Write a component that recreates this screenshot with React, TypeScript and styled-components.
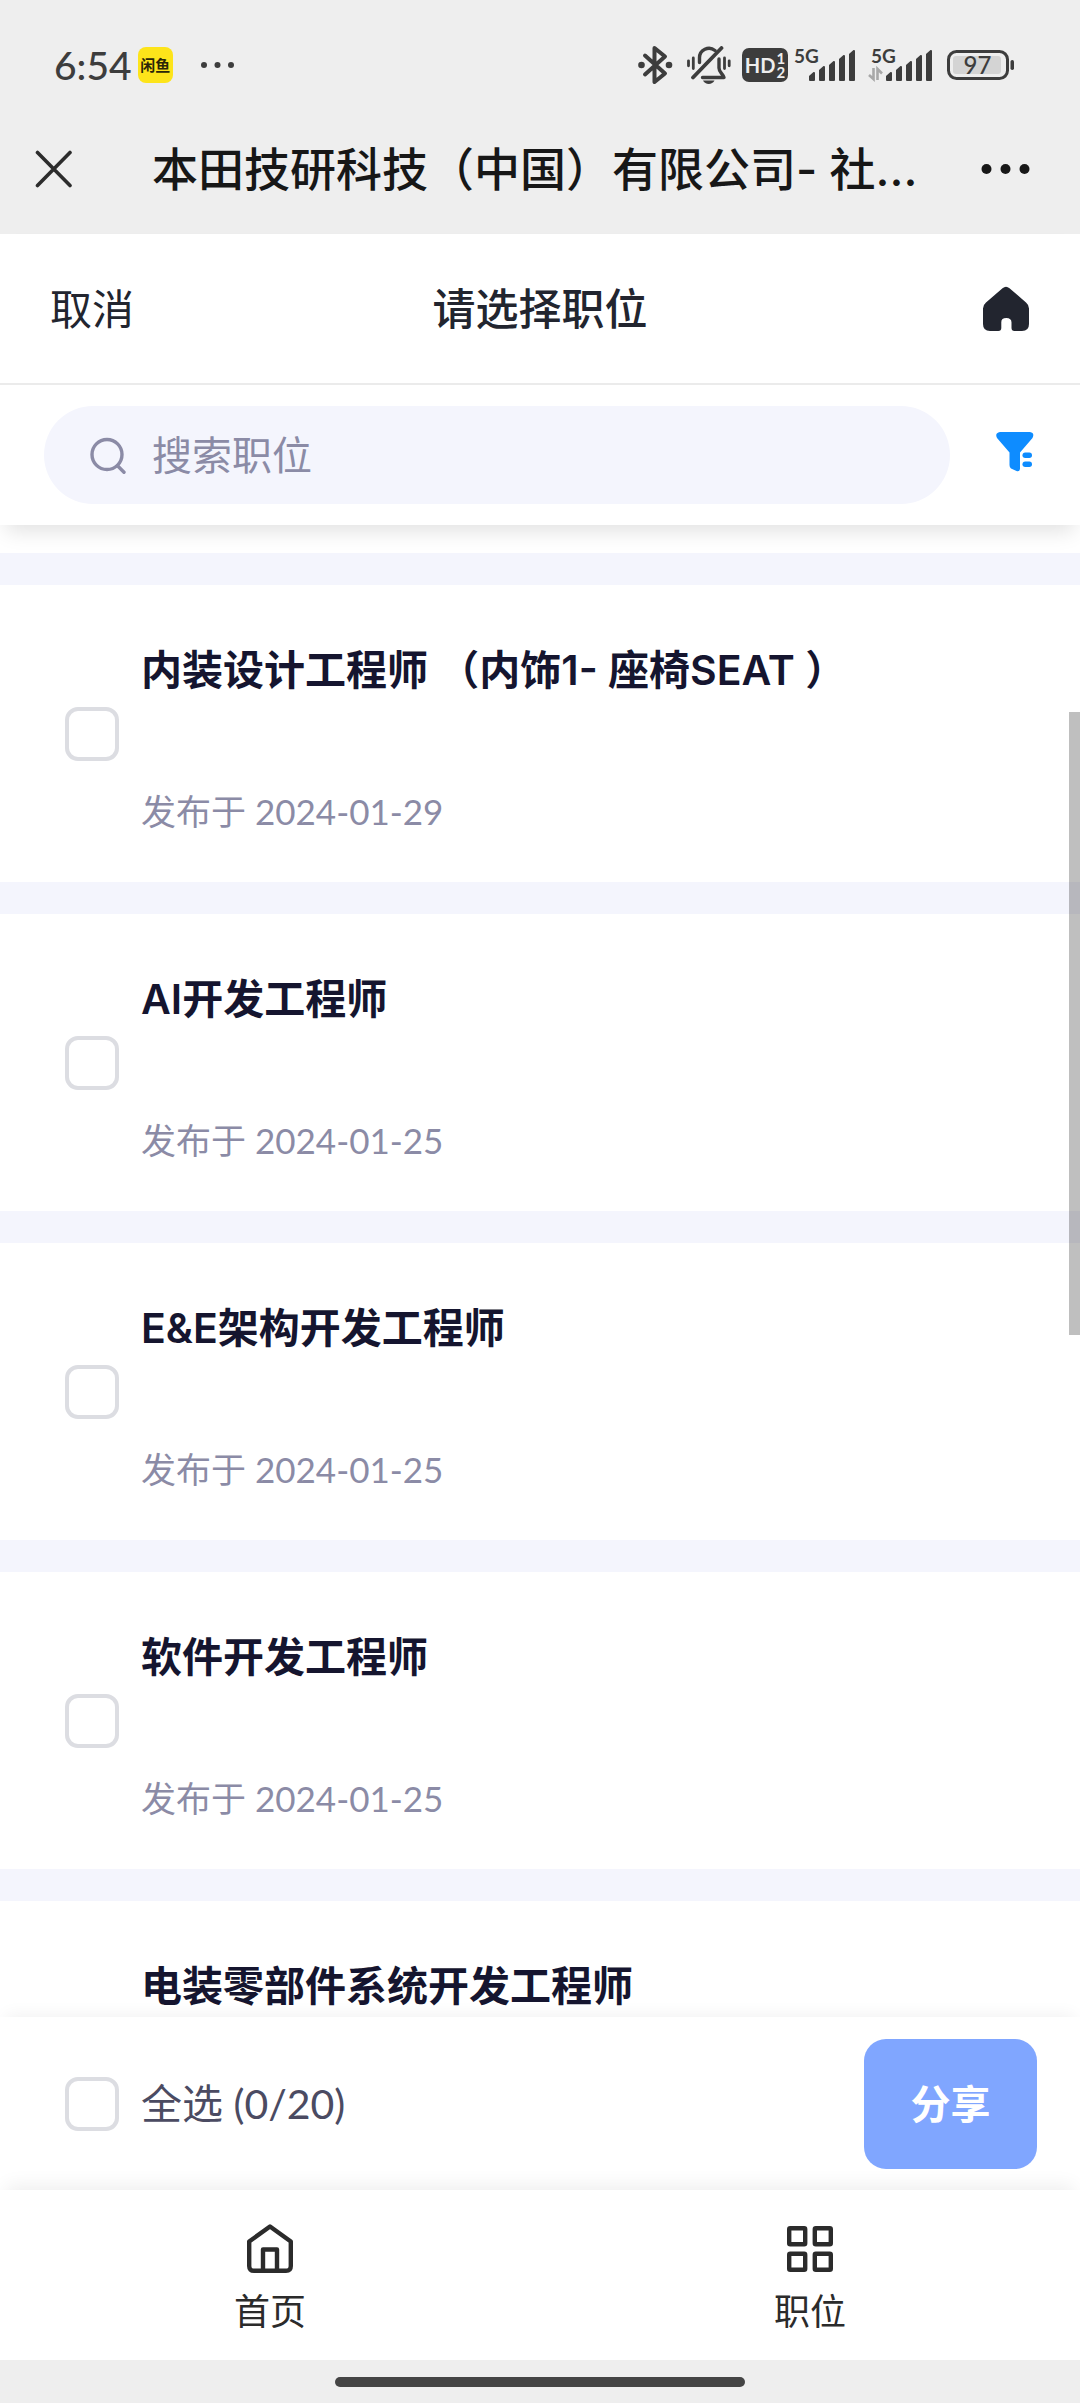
import React, { useState } from "react";
import styled, { createGlobalStyle } from "styled-components";

const GlobalStyle = createGlobalStyle`
  *, *::before, *::after { box-sizing: border-box; }
  html, body { margin: 0; padding: 0; }
  body {
    background: #ffffff;
    font-family: Lato, "Noto Sans CJK SC", sans-serif;
    -webkit-font-smoothing: antialiased;
  }
  button, input { font: inherit; color: inherit; }
`;

const Page = styled.div`
  display: flex;
  flex-direction: column;
  height: 100vh;
  overflow: hidden;
`;

/* ---------- system status bar ---------- */

const StatusBar = styled.div`
  display: flex;
  align-items: center;
  justify-content: space-between;
  flex: none;
  height: 104px;
  padding: 26px 66px 0 54px;
  background: #eeeeee;
  color: #3d3d3d;
`;

const StatusGroup = styled.div<{ $gap: number }>`
  display: flex;
  align-items: center;
  gap: ${(p) => p.$gap}px;
  svg { display: block; }
`;

const Clock = styled.span`
  font-size: 39px;
  line-height: 48px;
  font-weight: 500;
`;

const AppBadge = styled.span`
  display: flex;
  align-items: center;
  justify-content: center;
  width: 35px;
  height: 36px;
  border-radius: 8px;
  background: #fde41a;
  color: #2a2608;
  font-size: 15px;
  line-height: 20px;
  font-weight: 700;
`;

const MoreDots = styled.svg`
  margin-left: 20px;
`;

const HdBadge = styled.span`
  display: flex;
  align-items: center;
  justify-content: center;
  gap: 1px;
  width: 46px;
  height: 34px;
  border-radius: 7px;
  background: #3d3d3d;
  color: #eeeeee;
  font-size: 20px;
  line-height: 24px;
  font-weight: 700;
`;

const HdLines = styled.span`
  display: flex;
  flex-direction: column;
  font-size: 15px;
  line-height: 14px;
`;

/* ---------- browser title bar ---------- */

const TitleBar = styled.div`
  display: flex;
  align-items: center;
  flex: none;
  height: 130px;
  padding: 0 44px 0 24px;
  background: #eeeeee;
  color: #171717;
`;

const IconButton = styled.button`
  display: flex;
  align-items: center;
  justify-content: center;
  flex: none;
  width: 60px;
  height: 60px;
  padding: 0;
  border: 0;
  background: none;
  cursor: pointer;
  svg { display: block; }
`;

const PageTitle = styled.div`
  flex: 1;
  min-width: 0;
  padding-left: 68px;
  overflow: hidden;
  white-space: nowrap;
  font-family: Inter, "Noto Sans CJK SC", sans-serif;
  font-size: 46px;
  line-height: 60px;
  font-weight: 500;
`;

/* ---------- sticky header ---------- */

const Header = styled.header`
  position: relative;
  z-index: 1;
  flex: none;
  background: #ffffff;
  box-shadow: 0 12px 20px -6px rgba(0, 0, 0, 0.12);
`;

const NavRow = styled.div`
  display: grid;
  grid-template-columns: 1fr auto 1fr;
  align-items: center;
  height: 151px;
  padding: 0 44px;
  border-bottom: 2px solid #ebebeb;
  color: #22252f;
`;

const CancelButton = styled.button`
  justify-self: start;
  padding: 0 6px;
  border: 0;
  background: none;
  font-size: 42px;
  line-height: 60px;
  cursor: pointer;
`;

const NavTitle = styled.h1`
  margin: 0;
  font-size: 43px;
  line-height: 60px;
  font-weight: 500;
`;

const HomeButton = styled(IconButton)`
  justify-self: end;
`;

const SearchRow = styled.div`
  display: flex;
  align-items: center;
  gap: 35px;
  height: 140px;
  padding: 0 35px 0 44px;
`;

const SearchBox = styled.label`
  display: flex;
  align-items: center;
  gap: 25px;
  flex: 1;
  min-width: 0;
  height: 98px;
  padding: 0 46px;
  border-radius: 49px;
  background: #f4f5fd;
  svg { flex: none; }
`;

const SearchInput = styled.input`
  flex: 1;
  min-width: 0;
  height: 60px;
  padding: 0;
  border: 0;
  outline: 0;
  background: none;
  color: #15152f;
  font-size: 40px;
  &::placeholder { color: #8b8ba6; opacity: 1; }
`;

/* ---------- job list ---------- */

const ListArea = styled.main`
  position: relative;
  flex: 1;
  min-height: 0;
  overflow: hidden;
`;

const JobList = styled.ul`
  margin: 0;
  padding: 28px 0 0;
  list-style: none;
`;

const JobItem = styled.li`
  border-top: 32px solid #f4f5fd;
`;

const JobLabel = styled.label`
  display: flex;
  align-items: center;
  gap: 22px;
  min-height: 297px;
  padding: 0 65px;
  cursor: pointer;
`;

const JobBody = styled.span`
  display: flex;
  flex-direction: column;
  align-self: flex-start;
  gap: 89px;
  padding: 57px 0 47px;
`;

const JobName = styled.span`
  color: #15152f;
  font-family: Inter, "Noto Sans CJK SC", sans-serif;
  font-size: 41px;
  line-height: 56px;
  font-weight: 600;
  white-space: pre;
`;

const JobDate = styled.span`
  color: #8b8ba6;
  font-size: 35px;
  line-height: 48px;
`;

const Checkbox = styled.input`
  appearance: none;
  flex: none;
  width: 54px;
  height: 54px;
  margin: 0;
  border: 4px solid #dcdde2;
  border-radius: 13px;
  background: #ffffff;
  cursor: pointer;
  &:checked {
    border-color: #80a6ff;
    background: #80a6ff;
  }
`;

const ScrollThumb = styled.div`
  position: absolute;
  top: 12.5%;
  right: 0;
  width: 11px;
  height: 41.8%;
  background: rgba(0, 0, 0, 0.25);
`;

/* ---------- bottom bars ---------- */

const ActionBar = styled.div`
  position: relative;
  display: flex;
  align-items: center;
  justify-content: space-between;
  flex: none;
  height: 173px;
  padding: 0 43px 0 65px;
  background: #ffffff;
  box-shadow: 0 -8px 16px -6px rgba(0, 0, 0, 0.06);
`;

const SelectAll = styled.label`
  display: flex;
  align-items: center;
  gap: 22px;
  color: #4b4b62;
  font-size: 41px;
  line-height: 56px;
  cursor: pointer;
`;

const ShareButton = styled.button`
  width: 173px;
  height: 130px;
  border: 0;
  border-radius: 22px;
  background: #80a6ff;
  color: #ffffff;
  font-size: 40px;
  line-height: 56px;
  font-weight: 700;
  cursor: pointer;
`;

const TabBar = styled.nav`
  position: relative;
  display: flex;
  flex: none;
  height: 170px;
  background: #ffffff;
  box-shadow: 0 -10px 18px -6px rgba(0, 0, 0, 0.07);
`;

const Tab = styled.a`
  display: flex;
  flex: 1;
  flex-direction: column;
  align-items: center;
  gap: 9px;
  padding-top: 32px;
  color: #2b2b2b;
  font-size: 36px;
  line-height: 52px;
  text-decoration: none;
`;

const GestureArea = styled.div`
  display: flex;
  align-items: center;
  justify-content: center;
  flex: none;
  height: 43px;
  background: #eeeeee;
`;

const GestureBar = styled.div`
  width: 38%;
  height: 10px;
  border-radius: 5px;
  background: #444444;
`;

/* ---------- icons ---------- */

const INK = "#3d3d3d";

const BluetoothIcon = () => (
  <svg width="42" height="40" viewBox="0 0 42 40" fill="none" stroke={INK} strokeWidth="4" strokeLinejoin="round" strokeLinecap="round">
    <path d="M7 10.500 27 28.500 16.500 37V3L27 11.500 7 29.500" />
    <circle cx="3.500" cy="20" r="3.300" fill={INK} stroke="none" />
    <circle cx="31" cy="20" r="3.300" fill={INK} stroke="none" />
  </svg>
);

const MutedBellIcon = () => (
  <svg width="50" height="38" viewBox="0 0 50 38" fill="none" stroke={INK} strokeWidth="3.400" strokeLinecap="round" strokeLinejoin="round">
    <path d="M13.500 16.500V12A9.500 9.500 0 0 1 29 4.500" />
    <path d="M33 13v9c0 4 3.500 5.500 5 9.500H16.500" />
    <path d="M35.500 2 7 31.500" strokeWidth="3.800" />
    <path d="M2.500 14.800v5M7.300 12v10.500M38.500 12v10.500M43.200 14.800v5" strokeWidth="2.800" />
    <path d="M17 34.500h11.500c-2 4.600-9.500 4.600-11.500 0z" fill={INK} stroke="none" />
  </svg>
);

const SignalIcon = ({ data = false }: { data?: boolean }) => {
  const x = data ? 18 : 15;
  const width = data ? 73 : 68;
  const heights = [8, 14, 19, 25, 30];
  return (
    <svg width={width} height="50" viewBox={`0 -8 ${width} 50`} fill={INK}>
      <text x={data ? 3 : 0} y="15" fontFamily="Lato, sans-serif" fontSize="19" fontWeight="700">5G</text>
      {heights.map((h, i) => (
        <path
          key={h}
          d={`M${x + i * 10} 32v${-(h - 4)}l4.500-4h.500q1 0 1 1v${h - 1}q0 1-1 1h-4q-1 0-1-1z`}
        />
      ))}
      {data && (
        <path d="M5.500 20v11L1 27M9.500 32V21l4.500 4.500" fill="none" stroke="#a8a8a8" strokeWidth="2.600" />
      )}
    </svg>
  );
};

const BatteryIcon = () => (
  <svg width="67" height="32" viewBox="0 0 67 32">
    <rect x="1.500" y="2.500" width="59" height="27" rx="8" fill="none" stroke={INK} strokeWidth="3" />
    <rect x="6" y="7" width="48" height="18" rx="3" fill="#d4d4d4" />
    <rect x="63.500" y="11" width="3.500" height="10" rx="1.700" fill={INK} />
    <text x="30.500" y="24.500" textAnchor="middle" fontFamily="Lato, sans-serif" fontSize="24" fontWeight="500" fill={INK}>97</text>
  </svg>
);

const CloseIcon = () => (
  <svg width="38" height="38" viewBox="0 0 38 38" stroke="#2c2c2c" strokeWidth="3.600" strokeLinecap="round">
    <path d="M2.500 2.500 35 35.500M35 2.500 2.500 35.500" />
  </svg>
);

const MenuDotsIcon = () => (
  <svg width="50" height="12" viewBox="0 0 50 12" fill="#171717">
    <circle cx="5.500" cy="6" r="5" />
    <circle cx="24.500" cy="6" r="5" />
    <circle cx="43.500" cy="6" r="5" />
  </svg>
);

const HomeSolidIcon = () => (
  <svg width="46" height="46" viewBox="0 0 46 46" fill="#22252f">
    <path d="M19.500 2.200Q23 -.8 26.500 2.200L43 16.500Q46 19 46 22.500V38Q46 45 39 45H31.500Q28.500 45 28.500 42V36.500Q28.500 32 23.300 32T18.300 36.500V42Q18.300 45 15.300 45H7Q0 45 0 38V22.500Q0 19 3 16.500Z" />
  </svg>
);

const SearchIcon = () => (
  <svg width="37" height="37" viewBox="0 0 37 37" fill="none" stroke="#8b8ba6" strokeWidth="3.400" strokeLinecap="round">
    <circle cx="17" cy="17.500" r="15" />
    <path d="M27.800 29 34 35.200" />
  </svg>
);

const FilterIcon = () => (
  <svg width="38" height="46" viewBox="0 0 38 46" fill="#0e8cff">
    <path d="M4 0H34Q39 1 36.500 6L24 20.500V37Q23.500 40 20.500 39L15 36.500Q13.500 35.500 13.500 33V20.500L1 6Q-1.500 1 4 0Z" />
    <rect x="26.500" y="20.500" width="9.500" height="5.500" rx="2.700" />
    <rect x="26.500" y="29.500" width="9.500" height="5.500" rx="2.700" />
  </svg>
);

const HomeOutlineIcon = () => (
  <svg width="50" height="54" viewBox="0 0 50 54" fill="none" stroke="#2b2b2b" strokeWidth="4.400" strokeLinejoin="round">
    <path d="M4.200 19.500 25 4.500 45.800 19.500V44Q45.800 48.800 41 48.800H9Q4.200 48.800 4.200 44Z" />
    <path d="M18 48.800V27.500H32V48.800" />
  </svg>
);

const GridIcon = () => (
  <svg width="50" height="54" viewBox="0 0 50 54" fill="none" stroke="#2b2b2b" strokeWidth="4.400">
    <rect x="4.200" y="6.200" width="16" height="16" rx="1" />
    <rect x="29.800" y="6.200" width="16" height="16" rx="1" />
    <rect x="4.200" y="31.800" width="16" height="16" rx="1" />
    <rect x="29.800" y="31.800" width="16" height="16" rx="1" />
  </svg>
);

/* ---------- data ---------- */

interface Job {
  id: string;
  name: string;
  date?: string;
}

const JOBS: Job[] = [
  { id: "seat", name: "内装设计工程师 （内饰1- 座椅SEAT ）", date: "2024-01-29" },
  { id: "ai", name: "AI开发工程师", date: "2024-01-25" },
  { id: "ee", name: "E&E架构开发工程师", date: "2024-01-25" },
  { id: "software", name: "软件开发工程师", date: "2024-01-25" },
  { id: "parts", name: "电装零部件系统开发工程师" },
];

const TOTAL = 20;

export default function App() {
  const [selected, setSelected] = useState<string[]>([]);

  const toggle = (id: string) =>
    setSelected((ids) => (ids.includes(id) ? ids.filter((i) => i !== id) : [...ids, id]));

  const toggleAll = () =>
    setSelected((ids) => (ids.length === JOBS.length ? [] : JOBS.map((j) => j.id)));

  return (
    <Page>
      <GlobalStyle />

      <StatusBar>
        <StatusGroup $gap={6}>
          <Clock>6:54</Clock>
          <AppBadge>闲鱼</AppBadge>
          <MoreDots width="40" height="8" viewBox="0 0 40 8" fill={INK}>
            <circle cx="5" cy="4" r="3" />
            <circle cx="18.500" cy="4" r="3" />
            <circle cx="32" cy="4" r="3" />
          </MoreDots>
        </StatusGroup>
        <StatusGroup $gap={6}>
          <BluetoothIcon />
          <MutedBellIcon />
          <HdBadge>
            HD
            <HdLines>
              <span>1</span>
              <span>2</span>
            </HdLines>
          </HdBadge>
          <SignalIcon />
          <SignalIcon data />
          <BatteryIcon />
        </StatusGroup>
      </StatusBar>

      <TitleBar>
        <IconButton type="button" aria-label="关闭"><CloseIcon /></IconButton>
        <PageTitle>本田技研科技（中国）有限公司- 社...</PageTitle>
        <IconButton type="button" aria-label="更多"><MenuDotsIcon /></IconButton>
      </TitleBar>

      <Header>
        <NavRow>
          <CancelButton type="button">取消</CancelButton>
          <NavTitle>请选择职位</NavTitle>
          <HomeButton type="button" aria-label="首页"><HomeSolidIcon /></HomeButton>
        </NavRow>
        <SearchRow>
          <SearchBox>
            <SearchIcon />
            <SearchInput type="text" placeholder="搜索职位" aria-label="搜索职位" />
          </SearchBox>
          <IconButton type="button" aria-label="筛选"><FilterIcon /></IconButton>
        </SearchRow>
      </Header>

      <ListArea>
        <JobList>
          {JOBS.map((job) => (
            <JobItem key={job.id}>
              <JobLabel>
                <Checkbox
                  type="checkbox"
                  checked={selected.includes(job.id)}
                  onChange={() => toggle(job.id)}
                />
                <JobBody>
                  <JobName>{job.name}</JobName>
                  {job.date && <JobDate>发布于 {job.date}</JobDate>}
                </JobBody>
              </JobLabel>
            </JobItem>
          ))}
        </JobList>
        <ScrollThumb />
      </ListArea>

      <ActionBar>
        <SelectAll>
          <Checkbox
            type="checkbox"
            checked={selected.length === JOBS.length}
            onChange={toggleAll}
          />
          <span>全选 ({selected.length}/{TOTAL})</span>
        </SelectAll>
        <ShareButton type="button">分享</ShareButton>
      </ActionBar>

      <TabBar>
        <Tab href="#home"><HomeOutlineIcon />首页</Tab>
        <Tab href="#jobs"><GridIcon />职位</Tab>
      </TabBar>

      <GestureArea><GestureBar /></GestureArea>
    </Page>
  );
}
